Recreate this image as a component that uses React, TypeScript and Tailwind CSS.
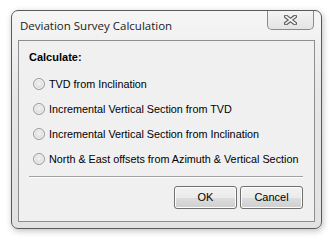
const OPTIONS = [
  "TVD from Inclination",
  "Incremental Vertical Section from TVD",
  "Incremental Vertical Section from Inclination",
  "North & East offsets from Azimuth & Vertical Section",
];

function Radio() {
  return (
    <span className="mr-[4px] inline-block h-[12px] w-[12px] shrink-0 rounded-full border border-[#9a9a9a] bg-[radial-gradient(circle_at_50%_45%,#f4f4f4_0%,#dcdcdc_60%,#c8c8c8_100%)] shadow-[inset_0_0_0_1px_#fafafa]" />
  );
}

function CloseGlyph() {
  return (
    <svg width="13" height="10" viewBox="0 0 13 10">
      <path d="M2 1.5 L11 8.5 M11 1.5 L2 8.5" stroke="#5b5b5b" strokeWidth="4" strokeLinecap="square" />
      <path d="M2 1.5 L11 8.5 M11 1.5 L2 8.5" stroke="#f4f4f4" strokeWidth="1.6" strokeLinecap="square" />
    </svg>
  );
}

export default function App() {
  return (
    <div className="h-[240px] w-[334px] bg-white pl-[11px] pt-[10px] font-['Liberation_Sans',sans-serif] text-[10.8px] text-black">
      <div className="flex h-[219px] w-[311px] flex-col rounded-[7px] border border-[#5a5a5a] bg-[linear-gradient(to_bottom,#f6f6f6,#e6e6e6_40%,#e2e2e2)] px-[6px] pb-[6px] shadow-[1px_2px_6px_rgba(0,0,0,0.25)]">
        <div className="flex h-[23px] items-start">
          <div className="pl-[2px] pt-[8px] font-['Open_Sans',sans-serif] text-[11.5px] leading-[14px] text-[#1a1a1a]">
            Deviation Survey Calculation
          </div>
          <div className="ml-auto mr-[1px] flex h-[19px] w-[47px] items-center justify-center rounded-b-[5px] border border-t-0 border-[#8a8a8a] bg-[linear-gradient(to_bottom,#f4f4f4,#e4e4e4)]">
            <CloseGlyph />
          </div>
        </div>
        <div className="mt-[6px] flex flex-1 flex-col border border-[#8e8e8e] bg-[#f0f0f0] pl-[10px] pr-[11px]">
          <div className="pt-[9px] text-[11px] font-bold leading-[14px]">Calculate:</div>
          <div className="mt-[13px] flex flex-col gap-[11px] pl-[4px]">
            {OPTIONS.map((o) => (
              <div key={o} className="flex h-[14px] items-center whitespace-nowrap">
                <Radio />
                <span className="leading-[14px]">{o}</span>
              </div>
            ))}
          </div>
          <div className="mt-[10px] h-px bg-[#a0a0a0] shadow-[0_1px_0_#fff]" />
          <div className="mt-[9px] flex justify-end gap-[3px]">
            {["OK", "Cancel"].map((b) => (
              <button
                key={b}
                className="h-[23px] w-[63px] rounded-[3px] border border-[#707070] bg-[linear-gradient(to_bottom,#f2f2f2_0%,#ebebeb_50%,#dddddd_51%,#cfcfcf_100%)] text-[11px] shadow-[inset_0_0_0_1px_#fcfcfc]"
              >
                {b}
              </button>
            ))}
          </div>
        </div>
      </div>
    </div>
  );
}
